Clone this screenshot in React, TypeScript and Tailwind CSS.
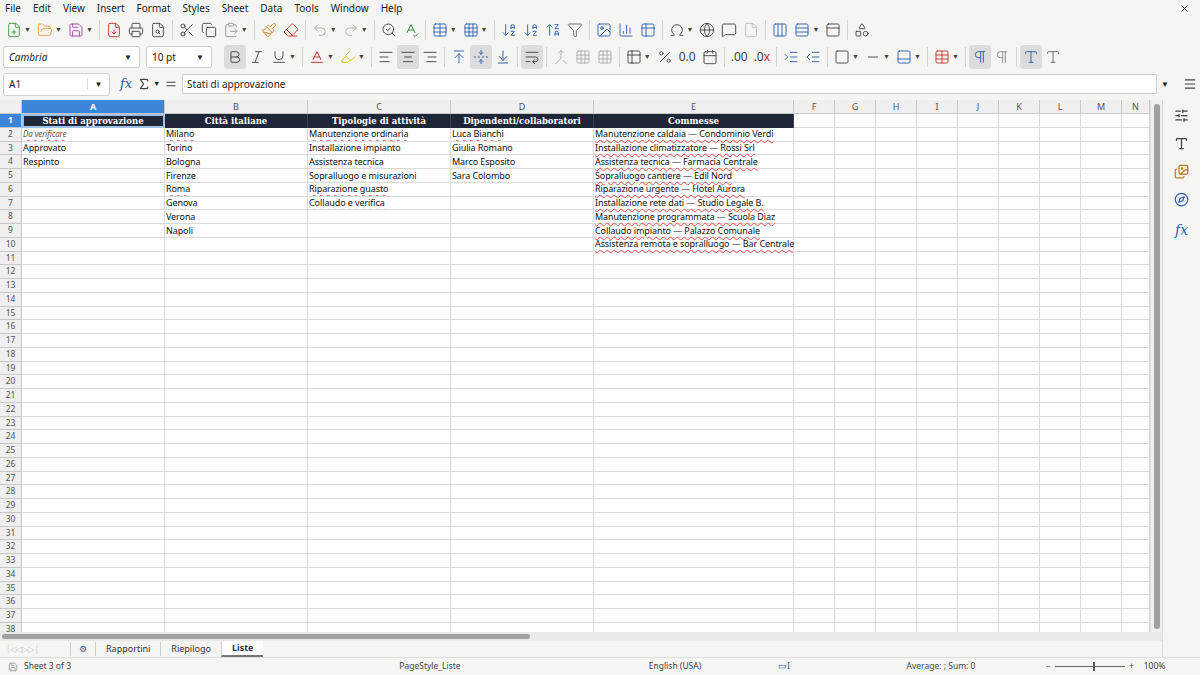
import React from "react";
import {
  FilePlus, FolderOpen, Save, FileDown, Printer, FileSearch, Scissors, Copy, ClipboardPaste, Paintbrush, Eraser,
  Undo2, Redo2, SearchCheck, SpellCheck, Table, Grid3x3, ArrowDownAZ, ArrowUpZA, Filter, Image, BarChart3, Table2,
  Omega, Globe, MessageSquare, File, Columns3, Rows3, PanelTop, Shapes, Bold, Italic, Underline, Baseline, Highlighter,
  AlignLeft, AlignCenter, AlignRight, ArrowUpToLine, FoldVertical, ArrowDownToLine, WrapText, Merge, Percent,
  Calendar, IndentIncrease, IndentDecrease, Square, Minus, PanelBottom, Pilcrow, Menu, SlidersHorizontal,
  Type, Images, Compass, Sigma, X, Equal
} from "lucide-react";

const cols: [string, number][] = [
  ["A", 143], ["B", 143], ["C", 143], ["D", 143], ["E", 200], ["F", 41], ["G", 41], ["H", 41], ["I", 41],
  ["J", 41], ["K", 41], ["L", 41], ["M", 41], ["N", 28],
];
const headers = ["Stati di approvazione", "Città italiane", "Tipologie di attività", "Dipendenti/collaboratori", "Commesse"];
const data: string[][] = [
  ["Da verificare", "Milano", "Manutenzione ordinaria", "Luca Bianchi", "Manutenzione caldaia — Condominio Verdi"],
  ["Approvato", "Torino", "Installazione impianto", "Giulia Romano", "Installazione climatizzatore — Rossi Srl"],
  ["Respinto", "Bologna", "Assistenza tecnica", "Marco Esposito", "Assistenza tecnica — Farmacia Centrale"],
  ["", "Firenze", "Sopralluogo e misurazioni", "Sara Colombo", "Sopralluogo cantiere — Edil Nord"],
  ["", "Roma", "Riparazione guasto", "", "Riparazione urgente — Hotel Aurora"],
  ["", "Genova", "Collaudo e verifica", "", "Installazione rete dati — Studio Legale B."],
  ["", "Verona", "", "", "Manutenzione programmata — Scuola Diaz"],
  ["", "Napoli", "", "", "Collaudo impianto — Palazzo Comunale"],
  ["", "", "", "", "Assistenza remota e sopralluogo — Bar Centrale"],
];

const I = ({ C, c = "#444", dd = false }: { C: any; c?: string; dd?: boolean }) => (
  <div className="flex items-center h-[24px] px-[3px]">
    <C size={16} color={c} strokeWidth={1.4} />
    {dd && <span className="text-[7px] text-[#444] ml-[2px]">▼</span>}
  </div>
);
const Sep = () => <div className="w-px h-[20px] bg-[#d4d4d4] mx-[3px]" />;

export default function App() {
  const sans = { fontFamily: "'Noto Sans','Open Sans',sans-serif" };
  return (
    <div className="w-[1200px] h-[675px] bg-[#f5f5f4] overflow-hidden flex flex-col text-[#222]" style={sans}>
      <div className="h-[17px] flex items-center text-[10px] px-[5px] gap-[12px] relative">
        {["File", "Edit", "View", "Insert", "Format", "Styles", "Sheet", "Data", "Tools", "Window", "Help"].map(m => <span key={m}>{m}</span>)}
        <X size={11} className="absolute right-[10px] top-[3px]" />
      </div>
      <div className="h-[26px] flex items-center px-[3px]">
        <I C={FilePlus} c="#3a9d3a" dd /><I C={FolderOpen} c="#e8a33c" dd /><I C={Save} c="#a6449e" dd /><Sep />
        <I C={FileDown} c="#c0392b" /><I C={Printer} /><I C={FileSearch} /><Sep />
        <I C={Scissors} /><I C={Copy} /><I C={ClipboardPaste} c="#999" dd /><Sep />
        <I C={Paintbrush} c="#d98a2b" /><I C={Eraser} c="#c0392b" /><Sep />
        <I C={Undo2} c="#aaa" dd /><I C={Redo2} c="#aaa" dd /><Sep />
        <I C={SearchCheck} /><I C={SpellCheck} c="#2e7d32" /><Sep />
        <I C={Table} c="#2b5fad" dd /><I C={Grid3x3} c="#2b5fad" dd /><Sep />
        <I C={ArrowDownAZ} c="#2b5fad" /><I C={ArrowDownAZ} c="#2b5fad" /><I C={ArrowUpZA} c="#2b5fad" /><I C={Filter} c="#666" /><Sep />
        <I C={Image} c="#2b5fad" /><I C={BarChart3} c="#2b5fad" /><I C={Table2} c="#2b5fad" /><Sep />
        <I C={Omega} dd /><I C={Globe} /><I C={MessageSquare} /><I C={File} c="#bbb" /><Sep />
        <I C={Columns3} c="#2b5fad" /><I C={Rows3} c="#2b5fad" dd /><I C={PanelTop} /><Sep /><I C={Shapes} />
      </div>
      <div className="h-[28px] flex items-center px-[3px]">
        <div className="w-[137px] h-[22px] bg-white border border-[#cfcfcf] rounded-[3px] flex items-center text-[10px] italic">
          <span className="flex-1 pl-[5px]">Cambria</span><span className="w-[22px] text-center text-[8px] not-italic">▼</span>
        </div>
        <div className="w-[66px] h-[22px] ml-[6px] bg-white border border-[#cfcfcf] rounded-[3px] flex items-center text-[10px]">
          <span className="flex-1 pl-[5px]">10 pt</span><span className="w-[22px] text-center text-[8px]">▼</span>
        </div>
        <div className="ml-[12px] bg-[#dcdcdc] rounded-[3px]"><I C={Bold} /></div>
        <I C={Italic} /><I C={Underline} dd /><Sep />
        <I C={Baseline} c="#c62828" dd /><I C={Highlighter} c="#d8c300" dd /><Sep />
        <I C={AlignLeft} /><div className="bg-[#dcdcdc] rounded-[3px]"><I C={AlignCenter} /></div><I C={AlignRight} /><Sep />
        <I C={ArrowUpToLine} c="#2b5fad" /><div className="bg-[#dcdcdc] rounded-[3px]"><I C={FoldVertical} c="#2b5fad" /></div><I C={ArrowDownToLine} c="#2b5fad" /><Sep />
        <div className="bg-[#dcdcdc] rounded-[3px]"><I C={WrapText} /></div><Sep />
        <I C={Merge} c="#aaa" /><I C={Grid3x3} c="#aaa" /><I C={Grid3x3} c="#aaa" /><Sep />
        <I C={Table2} dd /><I C={Percent} />
        <span className="text-[12px] px-[3px] text-[#444]">0.0</span><I C={Calendar} /><Sep />
        <span className="text-[12px] px-[3px] text-[#444]">.00</span><span className="text-[12px] px-[3px] text-[#444]">.0<span className="text-[#c62828]">x</span></span><Sep />
        <I C={IndentIncrease} c="#2b5fad" /><I C={IndentDecrease} c="#2b5fad" /><Sep />
        <I C={Square} dd /><I C={Minus} dd /><I C={PanelBottom} c="#2b5fad" dd /><Sep />
        <I C={Table} c="#c0392b" dd /><Sep />
        <div className="bg-[#dcdcdc] rounded-[3px]"><I C={Pilcrow} c="#2b5fad" /></div><I C={Pilcrow} c="#888" /><Sep />
        <div className="bg-[#dcdcdc] rounded-[3px]"><I C={Type} c="#2b5fad" /></div><I C={Type} c="#666" />
      </div>
      <div className="h-[26px] flex items-center px-[3px]">
        <div className="w-[107px] h-[23px] bg-white border border-[#cfcfcf] rounded-[3px] flex items-center text-[10px]">
          <span className="flex-1 pl-[5px]">A1</span><span className="w-[22px] text-center text-[8px] border-l border-[#ddd]">▼</span>
        </div>
        <span className="ml-[10px] text-[13px] italic text-[#2b5fad]" style={{ fontFamily: "'DejaVu Serif',serif" }}>fx</span>
        <Sigma size={14} className="ml-[5px]" color="#444" /><span className="text-[7px] ml-[2px]">▼</span>
        <Equal size={14} className="ml-[4px]" color="#444" />
        <div className="ml-[4px] w-[975px] h-[20px] bg-white border border-[#cfcfcf] flex items-center text-[10px] pl-[4px]">Stati di approvazione</div>
        <span className="text-[8px] ml-[4px]">▼</span>
        <Menu size={14} className="ml-[14px]" color="#444" />
      </div>
      <div className="flex flex-1 min-h-0 mt-[3px]">
        <div className="flex flex-col w-[1162px]">
          <div className="flex flex-1 min-h-0">
            <div className="w-[1150px] overflow-hidden bg-white" style={{ fontFamily: "'Noto Sans','Open Sans',sans-serif" }}>
              <div className="flex h-[14px] bg-[#efefef] border-b border-[#c8c8c8] text-[9px] text-[#555]">
                <div className="w-[22px] border-r border-[#c8c8c8]" />
                {cols.map(([n, w]) => (
                  <div key={n} style={{ width: w }} className={`shrink-0 flex items-center justify-center border-r border-[#c8c8c8] ${n === "A" ? "bg-[#3d85d8] text-white font-bold" : ""}`}>{n}</div>
                ))}
              </div>
              {Array.from({ length: 38 }, (_, r) => {
                const row = r + 1;
                return (
                  <div key={row} className="flex h-[13.75px] text-[9px]">
                    <div className={`w-[22px] shrink-0 flex items-center justify-center text-[8.5px] border-r border-b border-[#c8c8c8] ${row === 1 ? "bg-[#3d85d8] text-white font-bold" : "bg-[#efefef] text-[#555]"}`}>{row}</div>
                    {cols.map(([n, w], ci) => {
                      if (row === 1 && ci < 5) {
                        return (
                          <div key={n} style={{ width: w, fontFamily: "'DejaVu Serif','Liberation Serif',serif" }}
                            className={`shrink-0 bg-[#1e2638] text-white font-bold text-[8.5px] flex items-center justify-center border-r border-[#3a4256] ${ci === 0 ? "outline outline-2 outline-[#9fc0ea] -outline-offset-2" : ""}`}>
                            {headers[ci]}
                          </div>
                        );
                      }
                      const t = ci < 5 && row >= 2 && row <= 10 ? data[row - 2][ci] : "";
                      return (
                        <div key={n} style={{ width: w }} className={`shrink-0 border-r border-b border-[#dadada] flex items-center pl-[1px] whitespace-nowrap ${ci === 4 ? "overflow-visible relative z-10" : "overflow-hidden"} ${row === 2 && ci === 0 ? "text-[8px] italic text-[#555]" : "text-[#111]"}`}>
                          {t && <span className="underline decoration-wavy decoration-[#e05050] decoration-[0.5px] underline-offset-2 tracking-[-0.1px]">{t}</span>}
                        </div>
                      );
                    })}
                  </div>
                );
              })}
            </div>
            <div className="w-[12px] bg-[#f0f0f0] relative border-l border-[#ddd]">
              <div className="absolute left-[3px] top-[4px] w-[6px] h-[525px] bg-[#a0a0a0] rounded-[3px]" />
            </div>
          </div>
          <div className="h-[9px] bg-[#eaeaea] relative">
            <div className="absolute left-[2px] top-[2px] w-[528px] h-[5px] bg-[#a0a0a0] rounded-[3px]" />
          </div>
          <div className="h-[16px] flex items-center text-[9px] text-[#333] bg-[#f5f5f4]">
            <div className="w-[70px] text-[#ccc] pl-[6px] text-[8px] whitespace-nowrap">|◁◁▷▷|</div>
            <div className="px-[8px] text-[#2b5fad] border-l border-[#ccc]">⚙</div>
            <div className="px-[10px] border-l border-[#ccc]">Rapportini</div>
            <div className="px-[10px] border-l border-[#ccc]">Riepilogo</div>
            <div className="px-[10px] border-l border-[#ccc] font-bold bg-white border-b-2 border-b-[#777] h-full flex items-center">Liste</div>
          </div>
        </div>
        <div className="w-[38px] border-l border-[#d8d8d8] flex flex-col items-center pt-[8px] gap-[13px]">
          <SlidersHorizontal size={15} color="#444" />
          <Type size={15} color="#444" />
          <Images size={15} color="#c07a1a" />
          <Compass size={15} color="#2b5fad" />
          <span className="text-[14px] italic text-[#2b5fad]" style={{ fontFamily: "'DejaVu Serif',serif" }}>fx</span>
        </div>
      </div>
      <div className="h-[18px] flex items-center text-[8.5px] text-[#444] border-t border-[#ddd] bg-[#f5f5f4]">
        <div className="w-[120px] pl-[8px] flex items-center gap-[6px]"><Save size={10} color="#999" />Sheet 3 of 3</div>
        <div className="w-[280px] text-center ml-[170px]">PageStyle_Liste</div>
        <div className="w-[110px] text-center ml-[50px]">English (USA)</div>
        <div className="w-[50px] ml-[48px] text-[#2b5fad]">▭I</div>
        <div className="w-[110px] text-center ml-[58px]">Average: ; Sum: 0</div>
        <div className="ml-[50px] flex items-center gap-[4px]">
          <span>−</span><div className="w-[70px] h-px bg-[#666] relative"><div className="absolute left-[38px] -top-[4px] w-[2px] h-[9px] bg-[#555]" /></div><span>+</span>
          <span className="ml-[6px]">100%</span>
        </div>
      </div>
    </div>
  );
}
